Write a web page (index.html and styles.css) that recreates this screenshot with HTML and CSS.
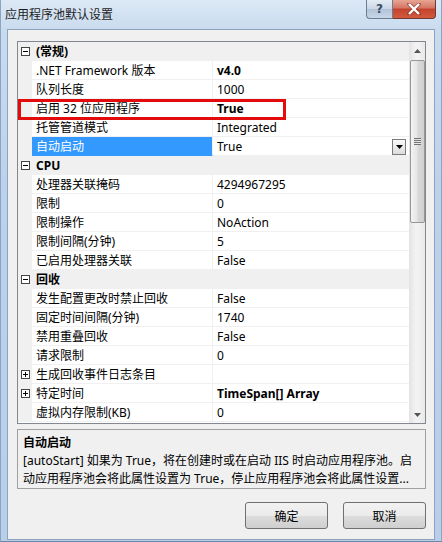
FILE: index.html
```html
<!DOCTYPE html>
<html lang="zh-CN">
<head>
<meta charset="utf-8">
<title>应用程序池默认设置</title>
<link rel="stylesheet" href="styles.css">
</head>
<body>
<div class="window">
  <div class="titlebar">
    <span class="title">应用程序池默认设置</span>
    <div class="caption">
      <span class="cbtn help">?</span>
      <span class="cbtn close">
        <svg width="14" height="12" viewBox="0 0 14 12"><path d="M2 1 L12 11 M12 1 L2 11" stroke="#7a2a20" stroke-width="4" stroke-linecap="square" opacity="0.5"/><path d="M2 1 L12 11 M12 1 L2 11" stroke="#fff" stroke-width="2.4" fill="none"/></svg>
      </span>
    </div>
  </div>
  <div class="client">
    <div class="grid">
      <div class="rows">
        <div class="row cat"><span class="gut"><svg class="box" width="9" height="9" viewBox="0 0 9 9"><rect x="0.5" y="0.5" width="8" height="8" fill="#fff" stroke="#444"/><path d="M2 4.5 H7" stroke="#000"/></svg></span><span class="cname">(常规)</span></div>
        <div class="row"><span class="gut"></span><span class="name">.NET Framework 版本</span><span class="val b">v4.0</span></div>
        <div class="row"><span class="gut"></span><span class="name">队列长度</span><span class="val">1000</span></div>
        <div class="row"><span class="gut"></span><span class="name">启用 32 位应用程序</span><span class="val b">True</span></div>
        <div class="row"><span class="gut"></span><span class="name">托管管道模式</span><span class="val">Integrated</span></div>
        <div class="row sel"><span class="gut"></span><span class="name">自动启动</span><span class="val">True<span class="dd"><svg width="7" height="4" viewBox="0 0 7 4"><path d="M0 0 H7 L3.5 4 Z" fill="#000"/></svg></span></span></div>
        <div class="row cat"><span class="gut"><svg class="box" width="9" height="9" viewBox="0 0 9 9"><rect x="0.5" y="0.5" width="8" height="8" fill="#fff" stroke="#444"/><path d="M2 4.5 H7" stroke="#000"/></svg></span><span class="cname">CPU</span></div>
        <div class="row"><span class="gut"></span><span class="name">处理器关联掩码</span><span class="val">4294967295</span></div>
        <div class="row"><span class="gut"></span><span class="name">限制</span><span class="val">0</span></div>
        <div class="row"><span class="gut"></span><span class="name">限制操作</span><span class="val">NoAction</span></div>
        <div class="row"><span class="gut"></span><span class="name">限制间隔(分钟)</span><span class="val">5</span></div>
        <div class="row"><span class="gut"></span><span class="name">已启用处理器关联</span><span class="val">False</span></div>
        <div class="row cat"><span class="gut"><svg class="box" width="9" height="9" viewBox="0 0 9 9"><rect x="0.5" y="0.5" width="8" height="8" fill="#fff" stroke="#444"/><path d="M2 4.5 H7" stroke="#000"/></svg></span><span class="cname">回收</span></div>
        <div class="row"><span class="gut"></span><span class="name">发生配置更改时禁止回收</span><span class="val">False</span></div>
        <div class="row"><span class="gut"></span><span class="name">固定时间间隔(分钟)</span><span class="val">1740</span></div>
        <div class="row"><span class="gut"></span><span class="name">禁用重叠回收</span><span class="val">False</span></div>
        <div class="row"><span class="gut"></span><span class="name">请求限制</span><span class="val">0</span></div>
        <div class="row"><span class="gut"><svg class="box" width="9" height="9" viewBox="0 0 9 9"><rect x="0.5" y="0.5" width="8" height="8" fill="#fff" stroke="#444"/><path d="M2 4.5 H7 M4.5 2 V7" stroke="#000"/></svg></span><span class="name">生成回收事件日志条目</span><span class="val"></span></div>
        <div class="row"><span class="gut"><svg class="box" width="9" height="9" viewBox="0 0 9 9"><rect x="0.5" y="0.5" width="8" height="8" fill="#fff" stroke="#444"/><path d="M2 4.5 H7 M4.5 2 V7" stroke="#000"/></svg></span><span class="name">特定时间</span><span class="val b">TimeSpan[] Array</span></div>
        <div class="row"><span class="gut"></span><span class="name">虚拟内存限制(KB)</span><span class="val">0</span></div>
      </div>
      <div class="scrollbar">
        <div class="sarrow"><svg width="7" height="4" viewBox="0 0 7 4"><path d="M0 4 H7 L3.5 0 Z" fill="#555"/></svg></div>
        <div class="thumb"><span class="grip"></span></div>
        <div class="strack"></div>
        <div class="sarrow"><svg width="7" height="4" viewBox="0 0 7 4"><path d="M0 0 H7 L3.5 4 Z" fill="#555"/></svg></div>
      </div>
      <div class="mark"></div>
    </div>
    <div class="desc">
      <div class="dtitle">自动启动</div>
      <div class="dline">[autoStart] 如果为 True，将在创建时或在启动 IIS 时启动应用程序池。启</div>
      <div class="dline">动应用程序池会将此属性设置为 True，停止应用程序池会将此属性设置...</div>
    </div>
    <div class="buttons">
      <span class="btn">确定</span>
      <span class="btn">取消</span>
    </div>
  </div>
</div>
</body>
</html>
```

FILE: styles.css
```css
html, body {
  margin: 0;
  padding: 0;
}
body {
  width: 442px;
  height: 542px;
  overflow: hidden;
  font-family: "Noto Sans", "Noto Sans CJK SC", sans-serif;
  font-size: 12px;
  color: #000;
}
.window {
  width: 442px;
  height: 542px;
  box-sizing: border-box;
  background: linear-gradient(to bottom, #dce8f5 0px, #c9dbef 30px, #bcd1ea 200px, #b9cfe9 542px);
  display: flex;
  flex-direction: column;
  border-left: 1px solid #8aa5c4;
  border-right: 1px solid #8aa5c4;
  border-bottom: 1px solid #6d87a8;
}
.titlebar {
  height: 29px;
  display: flex;
  align-items: flex-start;
  justify-content: space-between;
  flex-shrink: 0;
}
.title {
  padding: 6px 0 0 4px;
  font-family: "Noto Sans CJK SC", sans-serif;
  font-size: 12px;
  line-height: 16px;
  color: #1e1e1e;
}
.caption {
  display: flex;
  margin-right: 5px;
}
.cbtn {
  height: 19px;
  display: flex;
  align-items: center;
  justify-content: center;
  box-sizing: border-box;
}
.help {
  width: 27px;
  border: 1px solid #6d7d91;
  border-top: none;
  border-radius: 0 0 0 4px;
  background: linear-gradient(to bottom, #e4ecf5 0%, #c9d6e6 50%, #b2c3d8 51%, #c8d6e8 100%);
  color: #3b4a5e;
  font-family: "DejaVu Sans", sans-serif;
  font-weight: bold;
  font-size: 12px;
}
.close {
  width: 43px;
  border: 1px solid #6d3a36;
  border-left: none;
  border-top: none;
  border-radius: 0 0 4px 0;
  background: linear-gradient(to bottom, #e8a593 0%, #d47462 45%, #c2432d 50%, #d35a3d 100%);
}
.client {
  flex: 1;
  margin: 0 6px 1px 6px;
  border: 1px solid #8ea3bd;
  background: #f0f0f0;
  padding: 11px 8px 0 9px;
  display: flex;
  flex-direction: column;
}
.grid {
  position: relative;
  height: 383px;
  box-sizing: border-box;
  border: 1px solid #828790;
  background: #fff;
  display: flex;
}
.rows {
  flex: 1;
}
.row {
  height: 19px;
  display: flex;
  line-height: 17px;
  white-space: nowrap;
}
.gut {
  width: 14px;
  flex-shrink: 0;
  background: #f0f0f0;
  display: flex;
  align-items: center;
  justify-content: flex-end;
  box-sizing: border-box;
}
.box {
  display: block;
  margin-right: 2px;
}
.cat {
  background: #f0f0f0;
}
.cname {
  font-weight: bold;
  padding: 1px 0 0 4px;
}
.name {
  width: 181px;
  flex-shrink: 0;
  box-sizing: border-box;
  padding: 1px 0 0 4px;
  border-bottom: 1px solid #f0f0f0;
  border-right: 1px solid #f0f0f0;
  color: #000;
}
.val {
  flex: 1;
  padding: 1px 0 0 4px;
  border-bottom: 1px solid #f0f0f0;
  display: flex;
  align-items: center;
}
.b {
  font-weight: bold;
}
.sel .name {
  background: #3399ff;
  color: #fff;
  border-bottom-color: #3399ff;
}
.dd {
  margin-left: auto;
  margin-right: 3px;
  width: 14px;
  height: 16px;
  box-sizing: border-box;
  border: 1px solid #7a7a7a;
  background: linear-gradient(to bottom, #fafafa, #dcdcdc);
  display: flex;
  align-items: center;
  justify-content: center;
}
.scrollbar {
  width: 16px;
  flex-shrink: 0;
  background: linear-gradient(to right, #e3e3e3, #f2f2f2 40%, #f2f2f2 60%, #e8e8e8);
  display: flex;
  flex-direction: column;
  align-items: center;
}
.sarrow {
  height: 17px;
  width: 16px;
  display: flex;
  align-items: center;
  justify-content: center;
}
.thumb {
  margin-top: 1px;
  width: 15px;
  height: 163px;
  box-sizing: border-box;
  border: 1px solid #979797;
  border-radius: 2px;
  background: linear-gradient(to right, #f3f3f3, #e6e6e6 45%, #d8d8d8 55%, #d0d0d0);
  display: flex;
  align-items: center;
  justify-content: center;
}
.grip {
  width: 7px;
  height: 7px;
  background: repeating-linear-gradient(to bottom, #717171 0 1px, #e8e8e8 1px 2px);
}
.strack {
  flex: 1;
}
.mark {
  position: absolute;
  left: 0;
  top: 57px;
  width: 268px;
  height: 21px;
  border: 3px solid #e20c0c;
  box-sizing: border-box;
}
.desc {
  margin-top: 5px;
  height: 60px;
  box-sizing: border-box;
  border: 1px solid #a0a0a0;
  padding: 5px 0 0 5px;
  white-space: nowrap;
  overflow: hidden;
}
.dtitle {
  font-weight: bold;
  line-height: 16px;
  margin-bottom: 1px;
}
.dline {
  line-height: 18px;
}
.buttons {
  display: flex;
  justify-content: flex-end;
  gap: 15px;
  margin-top: 13px;
}
.btn {
  width: 83px;
  height: 27px;
  box-sizing: border-box;
  border: 1px solid #707070;
  border-radius: 3px;
  background: linear-gradient(to bottom, #f2f2f2 0%, #ebebeb 50%, #dddddd 51%, #cfcfcf 100%);
  display: flex;
  align-items: center;
  justify-content: center;
  font-family: "Noto Sans CJK SC", sans-serif;
}
```
